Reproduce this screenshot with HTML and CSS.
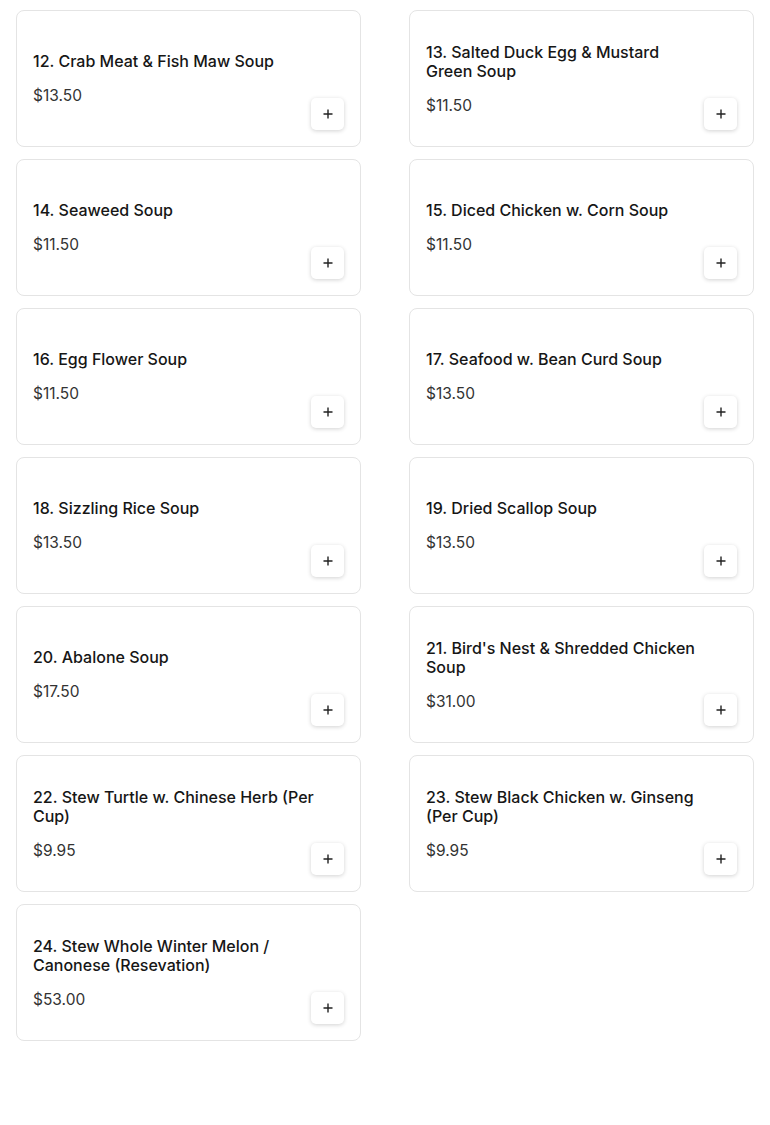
FILE: index.html
```html
<!DOCTYPE html>
<html lang="en">
  <head>
    <meta charset="UTF-8" />
    <meta name="viewport" content="width=device-width, initial-scale=1.0" />
    <title>Soups</title>
    <link rel="stylesheet" href="styles.css">
  </head>
  <body>
    <div class="menu-grid">
      <div class="item-card">
        <div class="item-info">
          <h3 class="item-name">12. Crab Meat &amp; Fish Maw Soup</h3>
          <p class="item-price">$13.50</p>
        </div>
        <button class="add-btn" aria-label="Add">
          <svg viewBox="0 0 12 12" width="12" height="12"><path d="M6 1.5v9M1.5 6h9" /></svg>
        </button>
      </div>
      <div class="item-card">
        <div class="item-info">
          <h3 class="item-name">13. Salted Duck Egg &amp; Mustard Green Soup</h3>
          <p class="item-price">$11.50</p>
        </div>
        <button class="add-btn" aria-label="Add">
          <svg viewBox="0 0 12 12" width="12" height="12"><path d="M6 1.5v9M1.5 6h9" /></svg>
        </button>
      </div>
      <div class="item-card">
        <div class="item-info">
          <h3 class="item-name">14. Seaweed Soup</h3>
          <p class="item-price">$11.50</p>
        </div>
        <button class="add-btn" aria-label="Add">
          <svg viewBox="0 0 12 12" width="12" height="12"><path d="M6 1.5v9M1.5 6h9" /></svg>
        </button>
      </div>
      <div class="item-card">
        <div class="item-info">
          <h3 class="item-name">15. Diced Chicken w. Corn Soup</h3>
          <p class="item-price">$11.50</p>
        </div>
        <button class="add-btn" aria-label="Add">
          <svg viewBox="0 0 12 12" width="12" height="12"><path d="M6 1.5v9M1.5 6h9" /></svg>
        </button>
      </div>
      <div class="item-card">
        <div class="item-info">
          <h3 class="item-name">16. Egg Flower Soup</h3>
          <p class="item-price">$11.50</p>
        </div>
        <button class="add-btn" aria-label="Add">
          <svg viewBox="0 0 12 12" width="12" height="12"><path d="M6 1.5v9M1.5 6h9" /></svg>
        </button>
      </div>
      <div class="item-card">
        <div class="item-info">
          <h3 class="item-name">17. Seafood w. Bean Curd Soup</h3>
          <p class="item-price">$13.50</p>
        </div>
        <button class="add-btn" aria-label="Add">
          <svg viewBox="0 0 12 12" width="12" height="12"><path d="M6 1.5v9M1.5 6h9" /></svg>
        </button>
      </div>
      <div class="item-card">
        <div class="item-info">
          <h3 class="item-name">18. Sizzling Rice Soup</h3>
          <p class="item-price">$13.50</p>
        </div>
        <button class="add-btn" aria-label="Add">
          <svg viewBox="0 0 12 12" width="12" height="12"><path d="M6 1.5v9M1.5 6h9" /></svg>
        </button>
      </div>
      <div class="item-card">
        <div class="item-info">
          <h3 class="item-name">19. Dried Scallop Soup</h3>
          <p class="item-price">$13.50</p>
        </div>
        <button class="add-btn" aria-label="Add">
          <svg viewBox="0 0 12 12" width="12" height="12"><path d="M6 1.5v9M1.5 6h9" /></svg>
        </button>
      </div>
      <div class="item-card">
        <div class="item-info">
          <h3 class="item-name">20. Abalone Soup</h3>
          <p class="item-price">$17.50</p>
        </div>
        <button class="add-btn" aria-label="Add">
          <svg viewBox="0 0 12 12" width="12" height="12"><path d="M6 1.5v9M1.5 6h9" /></svg>
        </button>
      </div>
      <div class="item-card">
        <div class="item-info">
          <h3 class="item-name">21. Bird's Nest &amp; Shredded Chicken Soup</h3>
          <p class="item-price">$31.00</p>
        </div>
        <button class="add-btn" aria-label="Add">
          <svg viewBox="0 0 12 12" width="12" height="12"><path d="M6 1.5v9M1.5 6h9" /></svg>
        </button>
      </div>
      <div class="item-card">
        <div class="item-info">
          <h3 class="item-name">22. Stew Turtle w. Chinese Herb (Per Cup)</h3>
          <p class="item-price">$9.95</p>
        </div>
        <button class="add-btn" aria-label="Add">
          <svg viewBox="0 0 12 12" width="12" height="12"><path d="M6 1.5v9M1.5 6h9" /></svg>
        </button>
      </div>
      <div class="item-card">
        <div class="item-info">
          <h3 class="item-name">23. Stew Black Chicken w. Ginseng (Per Cup)</h3>
          <p class="item-price">$9.95</p>
        </div>
        <button class="add-btn" aria-label="Add">
          <svg viewBox="0 0 12 12" width="12" height="12"><path d="M6 1.5v9M1.5 6h9" /></svg>
        </button>
      </div>
      <div class="item-card">
        <div class="item-info">
          <h3 class="item-name">24. Stew Whole Winter Melon / Canonese (Resevation)</h3>
          <p class="item-price">$53.00</p>
        </div>
        <button class="add-btn" aria-label="Add">
          <svg viewBox="0 0 12 12" width="12" height="12"><path d="M6 1.5v9M1.5 6h9" /></svg>
        </button>
      </div>
    </div>
  </body>
</html>
```

FILE: styles.css
```css
body {
  font-family: Inter, "Noto Sans", sans-serif;
  background-color: #fff;
  color: #161616;
  margin: 0;
  padding: 0;
}
.menu-grid {
  display: grid;
  grid-template-columns: 1fr 1fr;
  column-gap: 48px;
  row-gap: 12px;
  padding: 10px 16px 80px;
}
/* info and button share one cell: text centred, button in the corner */
.item-card {
  display: grid;
  grid-template-areas: "cell";
  height: 137px;
  box-sizing: border-box;
  padding: 16px;
  border: 1px solid #e4e4e4;
  border-radius: 8px;
  background-color: #fff;
}
.item-info {
  grid-area: cell;
  align-self: center;
  padding-right: 29px;
}
.item-name {
  margin: 0 0 16px;
  font-size: 16px;
  font-weight: 500;
  line-height: 19px;
}
.item-price {
  margin: 0;
  font-size: 15.5px;
  font-weight: 400;
  line-height: 18px;
  color: #333;
}
.add-btn {
  grid-area: cell;
  align-self: end;
  justify-self: end;
  width: 33px;
  height: 32px;
  padding: 0;
  display: flex;
  align-items: center;
  justify-content: center;
  background-color: #fff;
  border: none;
  border-radius: 5px;
  box-shadow: 0 1px 4px rgba(0, 0, 0, 0.18);
  cursor: pointer;
}
.add-btn svg {
  fill: none;
  stroke: #222;
  stroke-width: 1.4;
}
```
